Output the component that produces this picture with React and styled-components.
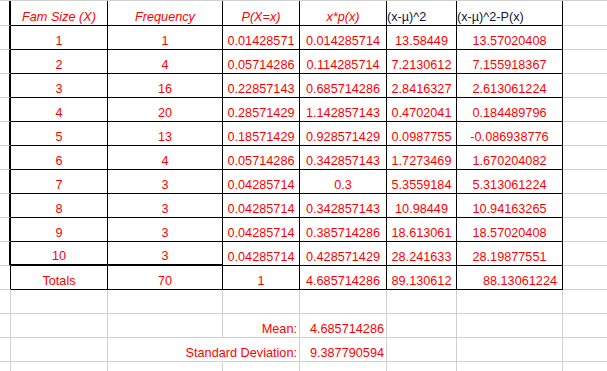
import React from 'react'
import styled, { createGlobalStyle } from 'styled-components'

const GRID = '#d0d0d0'
const RED = '#ff0000'

const GlobalStyle = createGlobalStyle`
  html, body {
    margin: 0;
    padding: 0;
    background: #fff;
  }
  body {
    font-family: "Liberation Sans", Arial, sans-serif;
  }
`

const Sheet = styled.div`
  width: 607px;
  height: 371px;
  overflow: hidden;
  box-sizing: border-box;
  border-top: 1px solid ${GRID};
  display: grid;
  grid-template-columns: 11px 97px 115px 77px 87px 70px 106px 1fr;
  grid-template-rows: 25px;
  grid-auto-rows: 24px;
  font-size: 12.7px;
  line-height: 14px;
  color: ${RED};
`

const Stub = styled.div`
  box-sizing: border-box;
  border-bottom: 1px solid ${GRID};
  border-right: ${p => (p.$w ? `${p.$w}px solid #000` : `1px solid ${GRID}`)};
`

const justify = a => (a === 'left' ? 'flex-start' : a === 'right' ? 'flex-end' : 'center')

const Cell = styled.div`
  box-sizing: border-box;
  display: flex;
  align-items: flex-end;
  justify-content: ${p => justify(p.$align)};
  padding: 0 ${p => p.$pr ?? 2}px 1px ${p => p.$pl ?? 2}px;
  white-space: nowrap;
  border-right: 1px solid ${p => (p.$noRight ? 'transparent' : p.$edge ? '#000' : GRID)};
  border-bottom: ${p => (p.$thick ? '2px solid #000' : `1px solid ${p.$edge ? '#000' : GRID}`)};
  font-style: ${p => (p.$italic ? 'italic' : 'normal')};
  color: ${p => p.$ink || RED};
`

const Filler = styled.div`
  box-sizing: border-box;
  border-bottom: 1px solid ${GRID};
`

const rows = [
  ['1', '1', '0.01428571', '0.014285714', '13.58449', '13.57020408'],
  ['2', '4', '0.05714286', '0.114285714', '7.2130612', '7.155918367'],
  ['3', '16', '0.22857143', '0.685714286', '2.8416327', '2.613061224'],
  ['4', '20', '0.28571429', '1.142857143', '0.4702041', '0.184489796'],
  ['5', '13', '0.18571429', '0.928571429', '0.0987755', '-0.086938776'],
  ['6', '4', '0.05714286', '0.342857143', '1.7273469', '1.670204082'],
  ['7', '3', '0.04285714', '0.3', '5.3559184', '5.313061224'],
  ['8', '3', '0.04285714', '0.342857143', '10.98449', '10.94163265'],
  ['9', '3', '0.04285714', '0.385714286', '18.613061', '18.57020408'],
  ['10', '3', '0.04285714', '0.428571429', '28.241633', '28.19877551'],
]

const totals = ['Totals', '70', '1', '4.685714286', '89.130612', '88.13061224']

const Blank = ({ noRight }) => (
  <>
    <Stub />
    <Cell />
    <Cell $noRight={noRight} />
    <Cell />
    <Cell />
    <Cell />
    <Cell />
    <Filler />
  </>
)

const Summary = ({ label, value, overflow }) => (
  <>
    <Stub />
    <Cell />
    <Cell $noRight={overflow} />
    <Cell $align="right">{label}</Cell>
    <Cell $align="right">{value}</Cell>
    <Cell />
    <Cell />
    <Filler />
  </>
)

export default function App() {
  return (
    <>
      <GlobalStyle />
      <Sheet>
        <Stub $w={2} />
        <Cell $edge $italic>Fam Size (X)</Cell>
        <Cell $edge $italic>Frequency</Cell>
        <Cell $edge $italic>P(X=x)</Cell>
        <Cell $edge $italic>x*p(x)</Cell>
        <Cell $edge $align="left" $pl={0} $ink="#15153a">(x-µ)^2</Cell>
        <Cell $edge $align="left" $pl={0} $ink="#15153a">(x-µ)^2-P(x)</Cell>
        <Filler />

        {rows.map((r, i) => (
          <React.Fragment key={r[0]}>
            <Stub $w={2} />
            {r.map((v, j) => (
              <Cell key={j} $edge $thick={i === rows.length - 1 && j < 2}>
                {v}
              </Cell>
            ))}
            <Filler />
          </React.Fragment>
        ))}

        <Stub $w={1} />
        {totals.map((v, j) => (
          <Cell key={j} $edge $align={j === 5 ? 'right' : 'center'} $pr={j === 5 ? 5 : 2}>
            {v}
          </Cell>
        ))}
        <Filler />

        <Blank />
        <Summary label="Mean:" value="4.685714286" />
        <Summary label="Standard Deviation:" value="9.387790594" overflow />
        <Blank />
      </Sheet>
    </>
  )
}
